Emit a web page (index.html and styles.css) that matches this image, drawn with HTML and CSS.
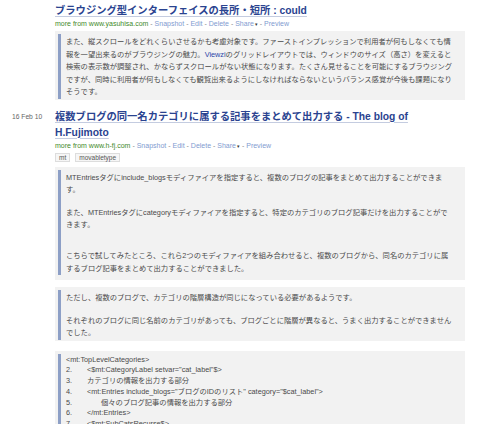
FILE: index.html
```html
<!DOCTYPE html>
<html lang="ja">
<head>
<meta charset="utf-8">
<title>Library</title>
<link rel="stylesheet" href="styles.css">
</head>
<body>
<div class="list">
  <div class="entry">
    <div class="date"></div>
    <div class="main">
      <div class="title"><a href="#">ブラウジング型インターフェイスの長所・短所 : could</a></div>
      <div class="meta"><span class="src">more from www.yasuhisa.com</span> - <a href="#">Snapshot</a> - <a href="#">Edit</a> - <a href="#">Delete</a> - <a href="#">Share</a><span class="caret">▾</span> - <a href="#">Preview</a></div>
      <div class="hl hl-first">
        <blockquote>
          <p>また、縦スクロールをどれくらいさせるかも考慮対象です。ファーストインプレッションで利用者が何もしなくても情<br>報を一望出来るのがブラウジングの魅力。<a class="inl" href="#">Viewzi</a>のグリッドレイアウトでは、ウィンドウのサイズ（高さ）を変えると<br>検索の表示数が調整され、かならずスクロールがない状態になります。たくさん見せることを可能にするブラウジング<br>ですが、同時に利用者が何もしなくても観覧出来るようにしなければならないというバランス感覚が今後も課題になり<br>そうです。</p>
        </blockquote>
      </div>
    </div>
  </div>

  <div class="entry entry-next">
    <div class="date">16 Feb 10</div>
    <div class="main">
      <div class="title"><a href="#">複数ブログの同一名カテゴリに属する記事をまとめて出力する - The blog of<br>H.Fujimoto</a></div>
      <div class="meta"><span class="src">more from www.h-fj.com</span> - <a href="#">Snapshot</a> - <a href="#">Edit</a> - <a href="#">Delete</a> - <a href="#">Share</a><span class="caret">▾</span> - <a href="#">Preview</a></div>
      <div class="tags"><span class="tag">mt</span><span class="tag">movabletype</span></div>
      <div class="hl hl-after-tags hl-tall">
        <blockquote>
          <p>MTEntriesタグにinclude_blogsモディファイアを指定すると、複数のブログの記事をまとめて出力することができま<br>す。</p>
          <p>また、MTEntriesタグにcategoryモディファイアを指定すると、特定のカテゴリのブログ記事だけを出力することがで<br>きます。</p>
          <p class="wide-gap">こちらで試してみたところ、これら2つのモディファイアを組み合わせると、複数のブログから、同名のカテゴリに属<br>するブログ記事をまとめて出力することができました。</p>
        </blockquote>
      </div>
      <div class="hl">
        <blockquote>
          <p>ただし、複数のブログで、カテゴリの階層構造が同じになっている必要があるようです。</p>
          <p>それぞれのブログに同じ名前のカテゴリがあっても、ブログごとに階層が異なると、うまく出力することができません<br>でした。</p>
        </blockquote>
      </div>
      <div class="hl hl-code">
        <blockquote class="code">
          <div class="cl">&lt;mt:TopLevelCategories&gt;</div>
          <div class="cl"><span class="n">2.</span>&lt;$mt:CategoryLabel setvar="cat_label"$&gt;</div>
          <div class="cl"><span class="n">3.</span>カテゴリの情報を出力する部分</div>
          <div class="cl"><span class="n">4.</span>&lt;mt:Entries include_blogs="ブログのIDのリスト" category="$cat_label"&gt;</div>
          <div class="cl"><span class="n">5.</span><span class="ind">個々のブログ記事の情報を出力する部分</span></div>
          <div class="cl"><span class="n">6.</span>&lt;/mt:Entries&gt;</div>
          <div class="cl"><span class="n">7.</span>&lt;$mt:SubCatsRecurse$&gt;</div>
          <div class="cl"><span class="n">8.</span>&lt;/mt:TopLevelCategories&gt;</div>
        </blockquote>
      </div>
    </div>
  </div>
</div>
</body>
</html>
```

FILE: styles.css
```css
html, body {
  margin: 0;
  padding: 0;
  background: #ffffff;
}

body {
  font-family: "Liberation Sans", "Noto Sans CJK JP", sans-serif;
  color: #444444;
  overflow: hidden;
}

.list {
  padding-top: 3px;
}

.entry {
  display: grid;
  grid-template-columns: 55px 410px;
}

.entry-next {
  margin-top: 9px;
}

.date {
  padding-left: 12px;
  font-size: 6.7px;
  line-height: 16px;
  color: #666666;
  white-space: nowrap;
}

.main {
  min-width: 0;
}

.title {
  font-size: 10.3px;
  line-height: 16px;
  font-weight: bold;
}

.title a {
  color: #2a4390;
  text-decoration: underline;
  text-decoration-color: #c4cce0;
  text-underline-offset: 1.5px;
}

.meta {
  font-size: 7px;
  line-height: 10px;
  color: #8a8a8a;
  white-space: nowrap;
}

.meta .src {
  color: #3f8a2a;
}

.meta a {
  color: #7f9bd0;
  text-decoration: none;
}

.meta .caret {
  color: #333333;
  font-size: 5px;
  margin-left: 1px;
}

.tags {
  display: flex;
  gap: 5px;
  margin-top: 2px;
}

.tag {
  font-size: 6.5px;
  line-height: 7px;
  padding: 0 3px;
  border: 1px solid #dddddd;
  background: #f6f6f6;
  color: #555555;
}

.hl {
  background: #f2f2f2;
  padding: 3px 3px 1px;
  margin-top: 7px;
}

.hl-first {
  margin-top: 2px;
}

.hl-after-tags {
  margin-top: 5px;
}

.hl-tall {
  padding-bottom: 5px;
}

.hl-code {
  margin-top: 10px;
}

blockquote {
  margin: 0;
  border-left: 3px solid #8d9fc6;
  padding: 2px 2px 0 5px;
  font-size: 7.3px;
  line-height: 12.5px;
  color: #4a4a4a;
  white-space: nowrap;
}

blockquote p {
  margin: 10px 0 0;
}

blockquote p:first-child {
  margin-top: 0;
}

blockquote p.wide-gap {
  margin-top: 18.5px;
}

.inl {
  color: #2a46a8;
  text-decoration: none;
}

.code {
  padding-top: 1px;
  line-height: 10.8px;
}

.n {
  display: inline-block;
  width: 21px;
}

.ind {
  padding-left: 14px;
}
```
